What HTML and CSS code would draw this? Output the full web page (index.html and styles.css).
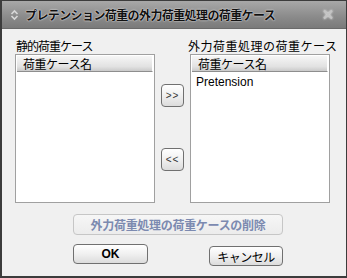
FILE: index.html
```html
<!DOCTYPE html>
<html lang="ja">
<head>
    <meta charset="UTF-8">
    <title>プレテンション荷重の外力荷重処理の荷重ケース</title>
    <link rel="stylesheet" href="styles.css">
</head>
<body>
<div class="window">
    <div class="titlebar">
        <svg class="grip" width="9" height="12" viewBox="0 0 9 12">
            <path d="M1.5 5 L4.5 2 L7.5 5 M1.5 7 L4.5 10 L7.5 7" fill="none" stroke="#d8d8d8" stroke-width="1.6"/>
        </svg>
        <span class="title">プレテンション荷重の外力荷重処理の荷重ケース</span>
        <svg class="close" width="12" height="11" viewBox="0 0 12 11">
            <path d="M2 1.5 L10 9.5 M10 1.5 L2 9.5" fill="none" stroke="#c4c4c4" stroke-width="2"/>
        </svg>
    </div>

    <div class="content">
        <div class="lists">
            <div class="column">
                <div class="label">静的荷重ケース</div>
                <div class="listbox">
                    <div class="header">荷重ケース名</div>
                </div>
            </div>
            <div class="movers">
                <button class="btn small">&gt;&gt;</button>
                <button class="btn small">&lt;&lt;</button>
            </div>
            <div class="column right">
                <div class="label">外力荷重処理の荷重ケース</div>
                <div class="listbox">
                    <div class="header">荷重ケース名</div>
                    <div class="item">Pretension</div>
                </div>
            </div>
        </div>

        <div class="actions">
            <button class="btn wide" disabled>外力荷重処理の荷重ケースの削除</button>
            <div class="row">
                <button class="btn ok">OK</button>
                <button class="btn cancel">キャンセル</button>
            </div>
        </div>
    </div>
</div>
</body>
</html>
```

FILE: styles.css
```css
html, body {
    margin: 0;
    height: 100%;
}

body {
    font-family: "Noto Sans CJK JP", "Liberation Sans", sans-serif;
    font-size: 12px;
    color: #000;
    background: #f0f0f0;
}

.window {
    box-sizing: border-box;
    width: 347px;
    height: 278px;
    border: 1px solid #3c3c3c;
    border-left-width: 2px;
    border-bottom-width: 2px;
    background: #f0f0f0;
    display: flex;
    flex-direction: column;
}

.titlebar {
    height: 28px;
    box-sizing: border-box;
    display: flex;
    align-items: center;
    padding: 0 0 0 8px;
    background: linear-gradient(#a8a8a8, #8a8a8a 60%, #7a7a7a);
    border-bottom: 1px solid #6a6a6a;
}

.grip {
    margin-right: 6px;
}

.title {
    flex: 1;
    font-weight: bold;
    font-size: 12px;
    letter-spacing: -0.6px;
    color: #111;
    text-shadow: 0 0 2px #ddd, 0 0 1px #fff;
}

.close {
    margin-right: 12px;
    filter: drop-shadow(0 0 1px #eee);
}

.content {
    flex: 1;
    padding: 8px 0 0 13px;
}

.lists {
    display: flex;
    align-items: flex-start;
}

.column {
    display: flex;
    flex-direction: column;
}

.label {
    height: 17px;
    line-height: 17px;
    padding-left: 1px;
    letter-spacing: -1px;
    white-space: nowrap;
}

.right .label {
    margin-left: -3px;
    letter-spacing: 0.5px;
}

.listbox {
    box-sizing: border-box;
    width: 140px;
    height: 149px;
    background: #fff;
    border: 1px solid #a0a0a0;
    padding: 1px;
}

.header {
    height: 15px;
    line-height: 15px;
    padding-left: 6px;
    letter-spacing: -0.5px;
    background: linear-gradient(#f6f6f6, #e2e2e2 70%, #cacaca);
    border-bottom: 1px solid #8e8e8e;
    border-right: 1px solid #fff;
}

.item {
    padding: 3px 0 0 4px;
    font-family: "Liberation Sans", Arial, sans-serif;
    font-size: 12px;
}

.movers {
    display: flex;
    flex-direction: column;
    gap: 41px;
    padding: 47px 6px 0 6px;
}

.btn {
    box-sizing: border-box;
    font-family: inherit;
    font-size: 12px;
    color: #000;
    padding: 0;
    border: 1px solid #707070;
    border-radius: 4px;
    background: linear-gradient(#ffffff, #f0f0f0 50%, #dcdcdc);
}

.small {
    width: 23px;
    height: 23px;
    font-family: "Liberation Sans", sans-serif;
    font-size: 10px;
    letter-spacing: 1px;
    color: #333;
}

.actions {
    display: flex;
    flex-direction: column;
    width: 210px;
    margin: 11px 0 0 58px;
}

.wide {
    height: 21px;
    font-weight: bold;
    color: #7c8ab0;
    border-color: #c6c6c6;
    background: linear-gradient(#f6f6f6, #ececec);
    letter-spacing: -0.3px;
}

.row {
    display: flex;
    justify-content: space-between;
    align-items: flex-start;
    margin-top: 9px;
}

.ok {
    width: 75px;
    height: 20px;
    font-family: "Liberation Sans", sans-serif;
    font-weight: bold;
}

.cancel {
    width: 74px;
    height: 20px;
    margin-top: 2px;
    letter-spacing: -0.5px;
}
```
